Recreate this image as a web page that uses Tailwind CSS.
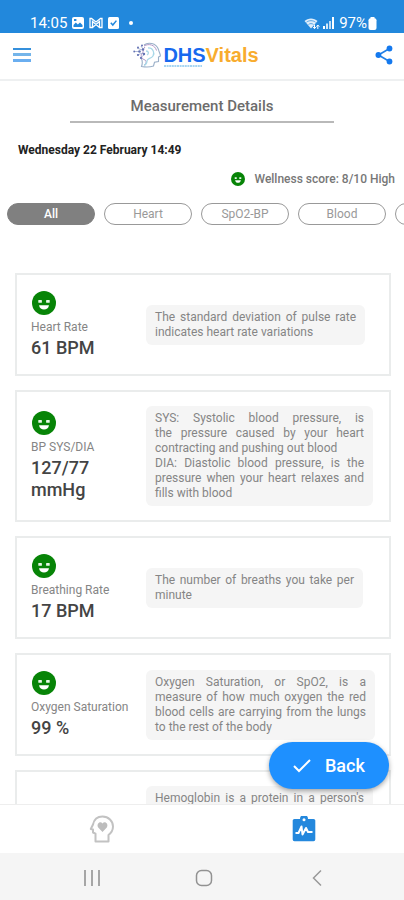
<!DOCTYPE html>
<html lang="en">
<head>
<meta charset="utf-8">
<meta name="viewport" content="width=device-width, initial-scale=1">
<title>DHSVitals - Measurement Details</title>
<script src="https://cdn.jsdelivr.net/npm/@tailwindcss/browser@4"></script>
</head>
<body class="relative flex h-dvh flex-col overflow-hidden bg-white font-['Roboto',sans-serif] text-[#858585]">
<svg class="hidden" aria-hidden="true">
  <symbol id="smile" viewBox="0 0 24 24">
    <circle cx="12" cy="12" r="12" fill="#078407"/>
    <rect x="6.300" y="9" width="3.600" height="2.800" rx=".5" fill="#e8f8e8"/>
    <rect x="14.100" y="9" width="3.600" height="2.800" rx=".5" fill="#e8f8e8"/>
    <path d="M7 14.200h10c-.5 2.900-2.500 4.400-5 4.400S7.500 17.100 7 14.200z" fill="#fff"/>
  </symbol>
</svg>

<div class="flex h-[33px] shrink-0 items-end justify-between bg-[#2288dc] pr-[27px] pb-px pl-[30px] text-white">
  <div class="flex items-center">
    <span class="text-[15px] leading-[18px]">14:05</span>
    <svg class="ml-[5px] h-3 w-3" viewBox="0 0 12 12"><rect width="12" height="12" rx="2" fill="#fff"/><path d="M1.500 10V8l2.300-2.500 2 2L8 5.500 10.500 8v2z" fill="#2288dc"/><rect x="2" y="2" width="2.400" height="2" fill="#2288dc"/></svg>
    <svg class="ml-[5px] h-3 w-[14px]" viewBox="0 0 14 12" fill="none" stroke="#fff" stroke-width="1.300"><path d="M1 1.500v9h2.500V4.500L7 7.500l3.500-3v6H13v-9h-1.500L7 5 2.500 1.500zM3.500 10.500 7 7.500l3.500 3"/></svg>
    <svg class="ml-[5px] h-3 w-[11px]" viewBox="0 0 11 12"><rect width="11" height="12" rx="1.500" fill="#fff"/><path d="M2.800 5.800 4.800 8l3.600-4.400" fill="none" stroke="#2288dc" stroke-width="1.500"/></svg>
    <span class="ml-[10px] h-1 w-1 rounded-full bg-white"></span>
  </div>
  <div class="flex items-center">
    <svg class="h-[13px] w-4" viewBox="0 0 16 13"><path d="M7 11.500.5 4C4 .5 10 .5 13.500 4L11 7z" fill="#fff" opacity=".85"/><path d="M2.500 5.200C5 3.200 9 3.200 11.500 5.200M4.500 7.500c1.500-1.200 3.500-1.200 5 0" stroke="#2288dc" stroke-width=".7" fill="none"/><path d="M10.500 11.500V7.700m-1.500 2.300 1.500 1.700L12 10M13.800 12V8m-1.500 1.700 1.500-1.700 1.500 1.700" stroke="#fff" fill="none"/></svg>
    <svg class="ml-[3px] h-3 w-[11px]" viewBox="0 0 11 12" fill="#fff"><rect y="9" width="2" height="3"/><rect x="3" y="6.500" width="2" height="5.500" opacity=".8"/><rect x="6" y="4" width="2" height="8" opacity=".7"/><rect x="9" width="2" height="12"/></svg>
    <span class="ml-[5px] text-[15px] leading-[18px]">97%</span>
    <svg class="ml-px h-[13px] w-[9px]" viewBox="0 0 9 13" fill="#fff"><rect x="2.500" width="4" height="3"/><rect x=".5" y="1.200" width="8" height="11.800" rx="2"/></svg>
  </div>
</div>

<header class="flex h-[48px] shrink-0 items-center justify-between border-b-2 border-[#eef0f1] pr-[11px] pb-[3px] pl-[13px]">
  <button type="button" aria-label="Menu" class="flex h-6 w-[18px] flex-col justify-center gap-[3px]">
    <span class="h-[2px] bg-[#3590dc]"></span><span class="h-[3px] bg-[#74b5ea]"></span><span class="h-[3px] bg-[#6aaef0]"></span>
  </button>
  <a href="#" aria-label="DHSVitals" class="mr-[14px] flex items-center">
    <svg class="h-[26px] w-[28px]" viewBox="0 0 28 26" fill="none">
      <path d="M11 3C15-.2 23 .8 25.500 7.500c.3 2.500 2.300 5 1.800 6.500l-1.800 1v4.500l-4 .8-1 3.700c-3 1-8 1.200-12 .5 1.500-4 .8-7-1.200-9.500" stroke="#9aafc8" stroke-width="1.100"/>
      <path d="M11 4c5-3 11-1 12.500 4.500M12 5c-3 3-1 5-3 7s0 5 3 6c2 1 1 4-1 5" stroke="#a78bc0" stroke-width=".9"/>
      <path d="M15 6c5-.5 7 5 5 8s-6 2-6 5-2 4-3 4.500M13 9c3 0 3 3 1 4" stroke="#a9d8e8" stroke-width="1.300"/>
      <path d="M1 9.500h6M4 6l5 2M4 13l6-2M7 16l4-3M8 4l2 3" stroke="#8c9bc6" stroke-width=".7"/>
      <g fill="#6373b4"><circle cx="1.200" cy="9.500" r=".9"/><circle cx="5" cy="5.500" r="1"/><circle cx="6.500" cy="9.500" r="1.300"/><circle cx="5" cy="13" r="1.100"/><circle cx="8" cy="16" r="1.100"/><circle cx="9" cy="3.500" r="1"/><circle cx="10" cy="7.500" r="1.200"/><circle cx="11" cy="12" r="1.200"/></g>
    </svg>
    <span class="relative ml-[2px] font-['Liberation_Sans',sans-serif] text-[20px] leading-6 font-bold text-[#f8ac2e]"><span class="text-[#1769ef]">DHS</span>Vitals<svg class="absolute bottom-0 left-px h-[2px] w-[38px]" viewBox="0 0 38 2"><path d="M0 1h38" stroke="#8ac8ee" stroke-width="1.300" stroke-dasharray="2 .6"/></svg></span>
  </a>
  <button type="button" aria-label="Share" class="h-5 w-[18px]">
    <svg class="h-5 w-[18px]" viewBox="0 0 18 20"><path d="M14.500 3.500 3.500 10l11 6.500" stroke="#2380e6" stroke-width="1.700" fill="none"/><g fill="#1479ee"><circle cx="14.500" cy="3.500" r="2.900"/><circle cx="3.400" cy="10" r="2.900"/><circle cx="14.500" cy="16.500" r="2.900"/></g></svg>
  </button>
</header>

<main class="min-h-0 flex-1 overflow-hidden">
  <h1 class="mx-[70px] border-b-2 border-[#b9b9b9] pt-[15px] pb-[5px] text-center text-[15px] leading-5 font-medium text-[#6c6c6c]">Measurement Details</h1>
  <p class="mt-[19px] pl-[18px] text-xs leading-4 font-bold text-[#222]">Wednesday 22 February 14:49</p>
  <p class="mt-[13px] flex items-center justify-end gap-[10px] pr-[9px] text-xs leading-4 font-medium text-[#777]"><svg class="h-[14px] w-[14px]"><use href="#smile"/></svg>Wellness score: 8/10 High</p>
  <nav aria-label="Filter" class="mt-4 flex gap-[9px] overflow-hidden pl-[7px] text-xs">
    <button type="button" class="h-[22px] w-[88px] shrink-0 rounded-full border border-[#808080] bg-[#808080] font-medium text-white">All</button>
    <button type="button" class="h-[22px] w-[88px] shrink-0 rounded-full border border-[#999] text-[#999]">Heart</button>
    <button type="button" class="h-[22px] w-[88px] shrink-0 rounded-full border border-[#999] text-[#999]">SpO2-BP</button>
    <button type="button" class="h-[22px] w-[88px] shrink-0 rounded-full border border-[#999] text-[#999]">Blood</button>
    <button type="button" aria-label="More" class="h-[22px] w-[88px] shrink-0 rounded-full border border-[#999]"></button>
  </nav>

  <div class="mt-12 mr-[13px] ml-[15px] flex flex-col gap-[14px]">
    <section class="flex min-h-[103px] items-center border-2 border-[#eaecec] pl-[14px]">
      <div class="w-[115px] shrink-0"><svg class="mb-1 ml-px h-6 w-6"><use href="#smile"/></svg><h2 class="text-xs leading-4">Heart Rate</h2><p class="w-20 pt-[2px] text-lg leading-[22px] font-medium text-[#444]">61 BPM</p></div>
      <p class="w-[219px] rounded-md bg-[#f5f5f5] px-[9px] py-[5px] text-justify text-xs leading-[15px]">The standard deviation of pulse rate indicates heart rate variations</p>
    </section>
    <section class="flex min-h-[132px] items-center border-2 border-[#eaecec] pl-[14px]">
      <div class="w-[115px] shrink-0"><svg class="mb-1 ml-px h-6 w-6"><use href="#smile"/></svg><h2 class="text-xs leading-4">BP SYS/DIA</h2><p class="w-20 pt-[2px] text-lg leading-[22px] font-medium text-[#444]">127/77 mmHg</p></div>
      <p class="w-[227px] rounded-md bg-[#f5f5f5] px-[9px] py-[5px] text-justify text-xs leading-[15px]">SYS: Systolic blood pressure, is the&nbsp;pressure caused by your heart contracting and pushing out blood<br>DIA: Diastolic blood pressure, is the pressure when your heart relaxes and fills with blood</p>
    </section>
    <section class="flex min-h-[103px] items-center border-2 border-[#eaecec] pl-[14px]">
      <div class="w-[115px] shrink-0"><svg class="mb-1 ml-px h-6 w-6"><use href="#smile"/></svg><h2 class="text-xs leading-4">Breathing Rate</h2><p class="w-20 pt-[2px] text-lg leading-[22px] font-medium text-[#444]">17 BPM</p></div>
      <p class="w-[217px] rounded-md bg-[#f5f5f5] px-[9px] py-[5px] text-justify text-xs leading-[15px]">The number of breaths you take per minute</p>
    </section>
    <section class="flex min-h-[103px] items-center border-2 border-[#eaecec] pl-[14px]">
      <div class="w-[115px] shrink-0"><svg class="mb-1 ml-px h-6 w-6"><use href="#smile"/></svg><h2 class="text-xs leading-4">Oxygen Saturation</h2><p class="w-20 pt-[2px] text-lg leading-[22px] font-medium text-[#444]">99 %</p></div>
      <p class="w-[229px] rounded-md bg-[#f5f5f5] px-[9px] py-[5px] text-justify text-xs leading-[15px]">Oxygen Saturation, or SpO2, is a measure of how much oxygen the red blood cells are carrying from the lungs to the rest of the body</p>
    </section>
    <section class="flex h-[103px] items-start border-2 border-[#eaecec] pt-[14px] pl-[14px]">
      <div class="w-[115px] shrink-0"></div>
      <p class="w-[227px] rounded-md bg-[#f5f5f5] px-[9px] py-[5px] text-xs leading-[15px] [text-align-last:justify]">Hemoglobin is a protein in a person's</p>
    </section>
  </div>
</main>

<nav aria-label="Sections" class="relative grid h-[49px] shrink-0 grid-cols-2 border-t border-[#eee] bg-white">
  <a href="#" aria-label="Wellness" class="flex items-center justify-center pl-[2px]">
    <svg class="h-[28px] w-[26px]" viewBox="0 0 26 28"><path d="M6.500 26.500v-7.800L4 17.500V14.500L1.800 14 4 9.500C5 4.500 8.500 1.500 13.500 1.500c6 0 10.500 4.500 10.500 10 0 4-2 6.500-4.500 8.500v6.500z" fill="none" stroke="#c2c2c2" stroke-width="2" stroke-linejoin="round"/><path d="M13.500 17 9.200 12.500c-2.200-3.500 2-7 4.300-4 2.300-3 6.500.5 4.300 4z" fill="#bdbdbd"/></svg>
  </a>
  <a href="#" aria-label="Measurements" class="flex items-center justify-center pl-[2px]">
    <svg class="h-[26px] w-6" viewBox="0 0 24 26"><path d="M2.500 3H8a4 4 0 0 1 8 0h5.500A1.800 1.800 0 0 1 23.300 5v18.500a1.800 1.800 0 0 1-1.800 1.800h-19A1.800 1.800 0 0 1 .7 23.500V5a1.800 1.800 0 0 1 1.800-2z" fill="#2488dd"/><circle cx="12" cy="3.800" r="1.500" fill="#fff"/><path d="M3.500 17H6.500l3-6.500 1 8L14 12l2 4h4.500" fill="none" stroke="#fff" stroke-width="2" stroke-linejoin="round"/></svg>
  </a>
  <button type="button" class="absolute right-[15px] bottom-[64px] flex h-[47px] w-[120px] items-center gap-[14px] rounded-full bg-[#1e90ff] pl-[24px] text-lg font-medium text-white shadow-[0_2px_5px_rgba(0,0,0,0.35)]">
    <svg class="h-4 w-[18px]" viewBox="0 0 18 16"><path d="m1 8 5 5L17 2" fill="none" stroke="#fff" stroke-width="2"/></svg>Back
  </button>
</nav>

<div class="grid h-[47px] shrink-0 grid-cols-[1fr_45px_1fr] items-center bg-[#f5f5f5] pt-[2px] pl-[3px]">
  <button type="button" aria-label="Recent apps" class="flex justify-center"><svg class="h-4 w-4" viewBox="0 0 16 16"><path d="M1 0v16M8 0v16M15 0v16" stroke="#a6a6a6" stroke-width="2"/></svg></button>
  <button type="button" aria-label="Home" class="flex justify-center"><svg class="h-[18px] w-[18px]" viewBox="0 0 18 18"><rect x="1.500" y="1.500" width="15" height="15" rx="5" fill="none" stroke="#929292" stroke-width="1.500"/></svg></button>
  <button type="button" aria-label="Go back" class="flex justify-center pl-[4px]"><svg class="h-[18px] w-[10px]" viewBox="0 0 10 18"><path d="M9 1.500 1.500 9 9 16.500" fill="none" stroke="#999" stroke-width="1.500"/></svg></button>
</div>
</body>
</html>
